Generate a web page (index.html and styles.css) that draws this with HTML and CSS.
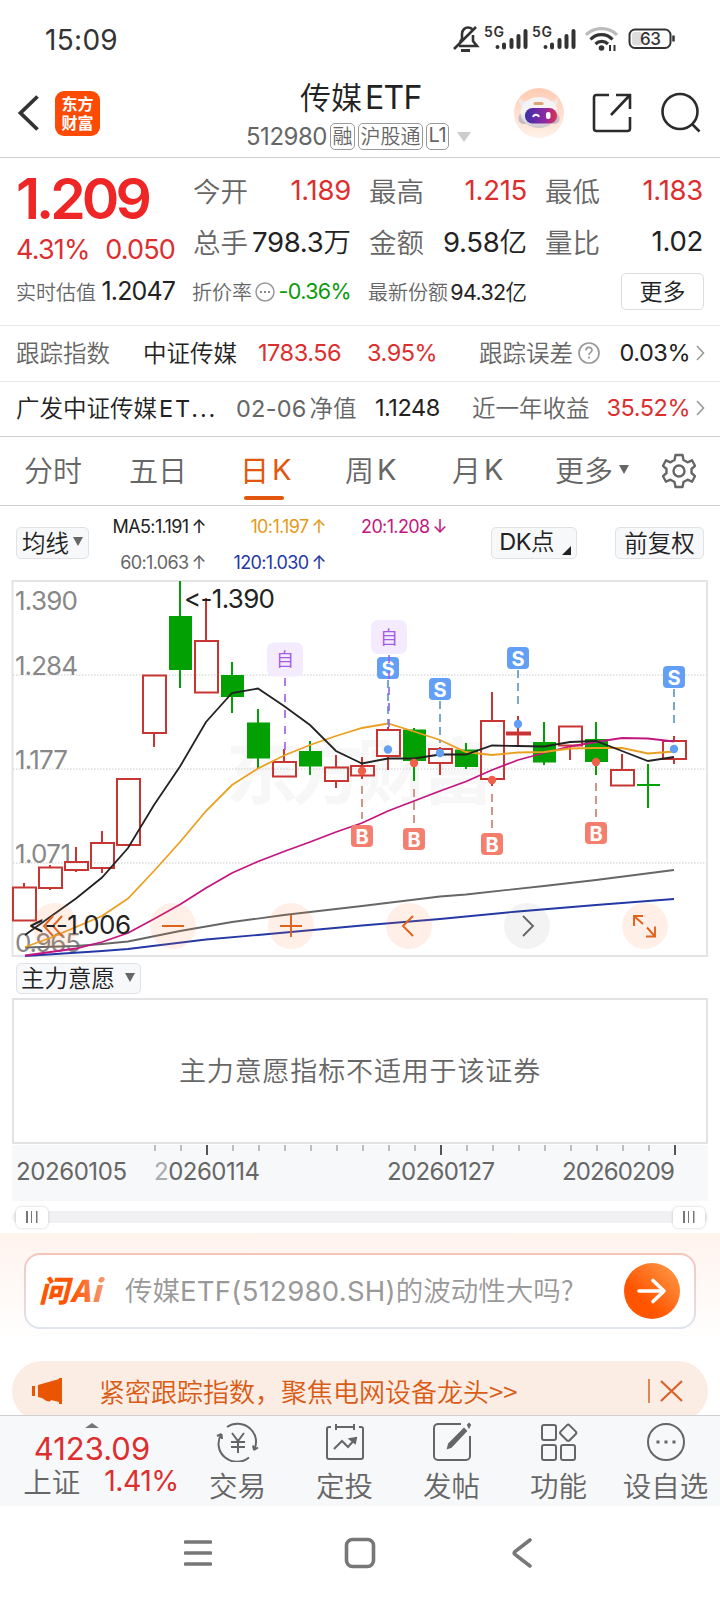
FILE: index.html
```
<!DOCTYPE html>
<html lang="zh-CN">
<head>
<meta charset="utf-8">
<title>传媒ETF 512980</title>
<link rel="stylesheet" href="styles.css">
</head>
<body>

<div class="statusbar">
  <span class="clock n">15:09</span>
  <svg class="status-icons" width="228" height="32" viewBox="450 22 228 32">
    <!-- muted bell -->
    <g fill="none" stroke="#333" stroke-width="2.6">
      <path d="M459 46h18l-4-5v-6M460 42l2-3v-5c0-4 3-6.500 6-6.500 1.500 0 3 .5 4 1.500M454 49l22-22"/>
      <path d="M461 50.500h9" stroke-width="3"/>
    </g>
    <g class="sig"><text x="484" y="37" textLength="20">5G</text><text x="532" y="37" textLength="20">5G</text></g>
    <g stroke="#333" stroke-width="4" stroke-linecap="round">
      <path d="M497.500 47v0M504 44.500v3M511.500 40v7M518.500 36v11M525.500 31v16"/>
      <path d="M545.500 47v0M552 44.500v3M559.500 40v7M566.500 36v11M573.500 31v16"/>
    </g>
    <g fill="none" stroke="#333" stroke-width="3.200">
      <path d="M586 35c8-8.500 23-8.500 31 0" stroke="#bbb"/>
      <path d="M590.500 39.500c6-6.500 16-6.500 22 0M595.500 44c3.500-3.500 9-3.500 12.500 0"/>
      <path d="M610 45v6M614.500 45v6" stroke-width="2"/>
    </g>
    <circle cx="601.500" cy="48" r="2.800" fill="#333"/>
    <rect x="629.500" y="29.500" width="41" height="18.500" rx="5.500" fill="none" stroke="#333" stroke-width="2"/>
    <rect x="632" y="32" width="10" height="13.500" rx="3" fill="#ddd"/>
    <path d="M673.500 35.500v6" stroke="#333" stroke-width="2.500"/>
    <text class="battery" x="640" y="45" textLength="21">63</text>
  </svg>
</div>

<header class="header">
  <div class="header-left">
    <svg width="22" height="38" viewBox="0 0 22 38"><path d="M20.500 2.500 3.500 19l17 16.500" fill="none" stroke="#333" stroke-width="3.800"/></svg>
    <div class="logo"><b>东方</b><b>财富</b></div>
  </div>
  <div class="title">
    <h1>传媒<span class="n">ETF</span></h1>
    <div class="subtitle">
      <span class="code n">512980</span><i>融</i><i>沪股通</i><i class="n">L1</i>
      <svg width="14" height="10"><path d="M0 0h14l-7 10z" fill="#ccc"/></svg>
    </div>
  </div>
  <div class="header-right">
    <svg width="50" height="50" viewBox="0 0 50 50">
      <defs>
        <linearGradient id="halo" x1="0" y1="0" x2="0" y2="1"><stop offset="0" stop-color="#ffcbb3"/><stop offset="1" stop-color="#fff1e8"/></linearGradient>
        <linearGradient id="visor"><stop offset="0" stop-color="#3b2fa8"/><stop offset=".6" stop-color="#8a2aa5"/><stop offset="1" stop-color="#e0304f"/></linearGradient>
        <linearGradient id="shell" x1="0" y1="0" x2="0" y2="1"><stop offset=".5" stop-color="#f6f3f4"/><stop offset="1" stop-color="#cdc6cc"/></linearGradient>
      </defs>
      <circle cx="25" cy="25" r="25" fill="url(#halo)"/>
      <path d="M6 9c0 4 3 4 7 4l-4 6c-4-2-5-6-3-10zM43 9c0 4-3 4-7 4l4 6c4-2 5-6 3-10z" fill="#efe9ea"/>
      <rect x="4.500" y="25" width="41" height="11" rx="5" fill="#c4bdc6"/>
      <ellipse cx="25" cy="24.500" rx="18.500" ry="15.500" fill="url(#shell)"/>
      <rect x="19.500" y="14" width="10" height="3" rx="1.500" fill="#dda574"/>
      <rect x="11" y="20" width="32" height="15.500" rx="7.500" fill="url(#visor)"/>
      <path d="M19 29c1-3 5-3 6 0" fill="none" stroke="#fff" stroke-width="1.800"/>
      <rect x="32" y="24" width="4.500" height="7" rx="2" fill="#fff"/>
    </svg>
    <svg width="40" height="40" viewBox="0 0 40 40" fill="none" stroke="#2b2b2b" stroke-width="2.600">
      <path d="M17 2H4.500a2.500 2.500 0 0 0-2.500 2.500v31a2.500 2.500 0 0 0 2.500 2.500h31a2.500 2.500 0 0 0 2.500-2.500V24M19 22 37 3M24 2h14v14"/>
    </svg>
    <svg width="42" height="42" viewBox="0 0 42 42" fill="none" stroke="#2b2b2b" stroke-width="2.600">
      <circle cx="20" cy="19.500" r="17.500"/><path d="m32 32 7.500 7.500"/>
    </svg>
  </div>
</header>

<section class="quote">
  <div class="last">
    <div class="price n">1.209</div>
    <div class="change red n"><span>4.31%</span><span>0.050</span></div>
  </div>
  <div class="cell"><label>今开</label><span class="n red">1.189</span></div>
  <div class="cell"><label>最高</label><span class="n red">1.215</span></div>
  <div class="cell"><label>最低</label><span class="n red">1.183</span></div>
  <div class="cell"><label>总手</label><span><span class="n">798.3</span>万</span></div>
  <div class="cell"><label>金额</label><span><span class="n">9.58</span>亿</span></div>
  <div class="cell"><label>量比</label><span class="n">1.02</span></div>
  <div class="cell small"><label>实时估值</label><span class="n est">1.2047</span></div>
  <div class="cell small"><label>折价率</label>
    <svg class="dots" width="20" height="20" viewBox="0 0 20 20"><circle cx="10" cy="10" r="9" fill="none" stroke="#999" stroke-width="1.500"/><path d="M5 10h2M9 10h2M13 10h2" stroke="#888" stroke-width="2"/></svg>
    <span class="n green">-0.36%</span></div>
  <div class="cell small"><label>最新份额</label><span><span class="n">94.32</span>亿</span></div>
  <div class="cell small"><button class="more">更多</button></div>
</section>

<section class="info-row track">
  <span class="gray">跟踪指数</span>
  <span>中证传媒</span>
  <span class="n red">1783.56</span>
  <span class="n red">3.95%</span>
  <span class="gray with-icon">跟踪误差<svg width="22" height="22" viewBox="0 0 22 22" fill="none" stroke="#999" stroke-width="1.700"><circle cx="11" cy="11" r="10"/><path d="M8 8.500c0-4 6-4 6-.3 0 2-3 2.300-3 4.800M11 14.500v2"/></svg></span>
  <span class="n right">0.03%</span>
  <svg class="chev" width="9" height="16"><path d="m1 1 6.500 7L1 15" fill="none" stroke="#999" stroke-width="1.600"/></svg>
</section>
<section class="info-row fund">
  <span>广发中证传媒<span class="n fund-tail">ET...</span></span>
  <span class="gray"><span class="n nav-date">02-06</span>净值</span>
  <span class="n">1.1248</span>
  <span class="gray">近一年收益</span>
  <span class="n red right">35.52%</span>
  <svg class="chev" width="9" height="16"><path d="m1 1 6.500 7L1 15" fill="none" stroke="#999" stroke-width="1.600"/></svg>
</section>

<nav class="tabs">
  <a>分时</a><a>五日</a><a class="on">日<span class="n">K</span></a><a>周<span class="n">K</span></a><a>月<span class="n">K</span></a>
  <a>更多<svg width="10" height="9"><path d="M0 0h10L5 9z" fill="#666"/></svg></a>
  <svg class="gear" width="34" height="36" viewBox="0 0 34 36" fill="none" stroke="#666" stroke-width="2.400" stroke-linejoin="round">
    <path d="M13.500 2h7l1 5 4 2.300 4.500-2 3 5.500-3.500 3.200v4l3.500 3.200-3 5.500-4.500-2-4 2.300-1 5h-7l-1-5-4-2.300-4.500 2-3-5.500L4.500 20v-4L1 12.800l3-5.500 4.500 2 4-2.300z"/><circle cx="17" cy="18" r="5.500"/>
  </svg>
</nav>

<section class="ma">
  <button class="chip">均线<svg width="10" height="9"><path d="M0 0h10L5 9z" fill="#666"/></svg></button>
  <div class="ma-values n">
    <span>MA5:1.191<em>↑</em></span><span class="c10">10:1.197<em>↑</em></span><span class="c20">20:1.208<em>↓</em></span>
    <span class="c60">60:1.063<em>↑</em></span><span class="c120">120:1.030<em>↑</em></span>
  </div>
  <button class="chip dk"><span><span class="n">DK</span>点</span><svg width="9" height="9"><path d="M9 0v9H0z" fill="#222"/></svg></button>
  <button class="chip fq">前复权</button>
</section>

<svg class="chart" width="720" height="378" viewBox="0 580 720 378">
  <text class="watermark" x="226" y="798" textLength="268">东方财富</text>
  <rect x="12.500" y="581" width="694.500" height="375" fill="none" stroke="#e2e2e4" stroke-width="1.800"/>
  <path d="M13 675h694M13 769h694M13 863h694" stroke="#ddd" stroke-width="1.500" stroke-dasharray="1.500 1.500"/>
  <g class="scale">
    <text x="15" y="610" textLength="63">1.390</text>
    <text x="15" y="675" textLength="63">1.284</text>
    <text x="15" y="769" textLength="53">1.177</text>
    <text x="15" y="863" textLength="56">1.071</text>
    <text x="15" y="952" textLength="66">0.965</text>
  </g>

  <!-- rising candles -->
  <g class="up">
    <path d="M24 883v4M50 865v3M50 888v2M76 847v15M76 870v2M102 831v12M102 868v5M154 733v14M206 598v43M284 749v13M336 755v12M336 781v7M362 757v9M362 775v4M388 727v3M388 756v14M440 747v2M440 763v12M492 692v29M492 779v7M518 716v31M570 745v15M622 754v16M674 736v5M674 759v5"/>
    <rect x="13" y="887.500" width="23" height="33"/>
    <rect x="39" y="867.500" width="23" height="20.500"/>
    <rect x="65" y="862" width="23" height="8"/>
    <rect x="91" y="843" width="23" height="25"/>
    <rect x="117" y="779" width="23" height="66"/>
    <rect x="143" y="675.500" width="23" height="57.500"/>
    <rect x="195" y="641" width="23" height="51.500"/>
    <rect x="273" y="762" width="23" height="14.500"/>
    <rect x="325" y="767.500" width="23" height="13.500"/>
    <rect x="351" y="766" width="23" height="9.500"/>
    <rect x="377" y="730" width="23" height="26"/>
    <rect x="429" y="749" width="23" height="14"/>
    <rect x="481" y="721" width="23" height="58"/>
    <rect x="507" y="732.500" width="23" height="2"/>
    <rect x="559" y="726.500" width="23" height="19"/>
    <rect x="611" y="770" width="23" height="15.500"/>
    <rect x="663" y="741" width="23" height="18"/>
  </g>
  <!-- falling candles -->
  <g class="down">
    <path d="M180 581v107M232 662v51M258 709v59M310 741v34M414 728v53M466 743v26M544 722v43M596 722v53M648 764v44"/>
    <rect x="169" y="616" width="23" height="54"/>
    <rect x="221" y="675" width="23" height="22"/>
    <rect x="247" y="722.500" width="23" height="36"/>
    <rect x="299" y="751" width="23" height="15.500"/>
    <rect x="403" y="729.500" width="23" height="31.500"/>
    <rect x="455" y="749.500" width="23" height="17.500"/>
    <rect x="533" y="742" width="23" height="20.500"/>
    <rect x="585" y="739" width="23" height="23"/>
    <rect x="637" y="784" width="23" height="2"/>
  </g>

  <!-- moving averages -->
  <g class="avg">
    <polyline stroke="#666" points="25,947.500 76,946 102,944 128,941.500 180,931 232,922 284,915 362,906 440,896.500 466,894.500 544,886 596,880 674,870"/>
    <polyline stroke="#2438a6" points="25,956 102,951 128,949 206,939.500 258,935 362,925.500 440,919 518,911.500 596,905 674,899"/>
    <polyline stroke="#c3177f" points="25,955.500 76,948.500 102,942 128,933 154,919 180,904.500 206,888 232,873 258,861.500 284,851.500 310,842 336,832 362,823 388,811 414,801 440,791 466,781.500 492,770 518,760 544,753 570,746.500 596,742 622,738 648,738.500 674,741.500"/>
    <polyline stroke="#eaa021" points="25,947 50,938 76,927 102,916 128,898.500 154,871 180,842 206,811 232,785 258,768.500 284,755.500 310,745 336,736 362,728 388,723.500 414,731.500 440,740 466,752 492,755 518,752.500 544,752 570,748.500 596,748 622,748 648,753.500 674,751.500"/>
    <polyline stroke="#222" points="25,935 50,917 76,898.500 102,877.500 128,848 154,805 180,766.500 206,722 232,693 258,688.500 284,706 310,725 336,751 362,763.500 388,758.500 414,758.500 440,754.500 466,754.500 492,745.500 518,746 544,746.500 570,742 596,741 622,751 648,761 674,757"/>
  </g>

  <!-- trade marks -->
  <g fill="none" stroke-width="1.800">
    <path d="M388 680v45M440 701v42M518 670v38M674 689v38" stroke="#6b9fc7" stroke-dasharray="8 5"/>
    <path d="M362 786v33M414 789v38M492 794v38M596 783v38" stroke="#c98d82" stroke-dasharray="8 5"/>
    <path d="M285 678v72" stroke="#a86be8" stroke-dasharray="8 8"/>
  </g>
  <g fill="#629ff5">
    <circle cx="388" cy="749.500" r="4.200"/><circle cx="440" cy="753" r="4.200"/><circle cx="518" cy="724" r="4.200"/><circle cx="674" cy="749" r="4.200"/>
    <rect x="377" y="657" width="22" height="22" rx="4"/><rect x="429" y="678" width="22" height="22" rx="4"/><rect x="507" y="647" width="22" height="22" rx="4"/><rect x="663" y="666" width="22" height="22" rx="4"/>
  </g>
  <g fill="#f47f6f">
    <g fill="#f05f4a"><circle cx="362" cy="771" r="4.200"/><circle cx="414" cy="763" r="4.200"/><circle cx="492" cy="780" r="4.200"/><circle cx="596" cy="762" r="4.200"/></g>
    <rect x="351" y="825" width="22" height="22" rx="4"/><rect x="403" y="828" width="22" height="22" rx="4"/><rect x="481" y="833" width="22" height="22" rx="4"/><rect x="585" y="822" width="22" height="22" rx="4"/>
  </g>
  <g class="mark">
    <text x="388" y="675.500">S</text><text x="440" y="696.500">S</text><text x="518" y="665.500">S</text><text x="674" y="684.500">S</text>
    <text x="362" y="843.500">B</text><text x="414" y="846.500">B</text><text x="492" y="851.500">B</text><text x="596" y="840.500">B</text>
  </g>
  <path d="M389 655v72" stroke="#9463e8" stroke-width="1.600" stroke-dasharray="8 8"/>
  <g fill="#f4ebfe"><rect x="267" y="642.500" width="36" height="34" rx="7"/><rect x="371" y="620" width="36" height="34" rx="7"/></g>
  <g class="self"><text x="285" y="666">自</text><text x="389" y="644">自</text></g>

  <!-- round controls -->
  <g fill="#fd7b3a" fill-opacity=".12"><circle cx="55" cy="926" r="23"/><circle cx="173" cy="926" r="23"/><circle cx="291" cy="926" r="23"/><circle cx="409" cy="926" r="23"/><circle cx="527" cy="926" r="23" fill="#555" fill-opacity=".07"/><circle cx="645" cy="926" r="23"/></g>
  <g fill="none" stroke="#e0621c" stroke-width="1.900">
    <path d="M53 916 44 926l9 10M62 916l-9 10 9 10"/>
    <path d="M162 926h22M280 926h22M291 915v22M413 916l-10 10 10 10"/>
    <path d="M634 926v-10h9M634 916l9 8M655 926.500v10h-9M655 936.500l-8-9"/>
    <path d="m523 916 10 10-10 10" stroke="#666"/>
  </g>
  <g class="extreme">
    <text x="184" y="608" textLength="91">&lt;-1.390</text>
    <text x="28" y="934" textLength="103">&lt;--1.006</text>
  </g>
</svg>

<button class="chip indicator">主力意愿<svg width="10" height="9"><path d="M0 0h10L5 9z" fill="#666"/></svg></button>
<div class="empty">主力意愿指标不适用于该证券</div>

<svg class="axis" width="720" height="56" viewBox="0 1145 720 56">
  <rect x="12" y="1145" width="696" height="56" fill="#f7f8fa"/>
  <path d="M155 1145v6M181 1145v6M233 1145v6M259 1145v6M285 1145v6M311 1145v6M337 1145v6M363 1145v6M389 1145v6M415 1145v6M467 1145v6M493 1145v6M519 1145v6M545 1145v6M571 1145v6M597 1145v6M623 1145v6M649 1145v6" stroke="#aaa" stroke-width="1.500"/>
  <path d="M207 1145v10M441 1145v10M675 1145v10" stroke="#555" stroke-width="2"/>
  <text x="16" y="1180" textLength="111">20260105</text>
  <text x="154" y="1180" textLength="106"><tspan fill="#aaa">2</tspan>0260114</text>
  <text x="387" y="1180" textLength="108">20260127</text>
  <text x="562" y="1180" textLength="113">20260209</text>
</svg>

<div class="slider"><i></i><i></i></div>

<section class="ask">
  <div class="ask-box">
    <svg class="ai-logo" width="72" height="44" viewBox="0 0 72 44">
      <defs><linearGradient id="ai"><stop offset=".5" stop-color="#fd5602"/><stop offset="1" stop-color="#f59a76"/></linearGradient></defs>
      <text x="0" y="33" textLength="62" fill="url(#ai)">问Ai</text>
    </svg>
    <span class="question">传媒<span class="n">ETF(512980.SH)</span>的波动性大吗?</span>
    <svg class="go" width="56" height="56" viewBox="0 0 56 56">
      <defs><linearGradient id="go" x1=".2" y1=".8" x2=".9" y2=".1"><stop offset=".2" stop-color="#ff5500"/><stop offset="1" stop-color="#ff9443"/></linearGradient></defs>
      <circle cx="28" cy="28" r="28" fill="url(#go)"/>
      <path d="M15 28h25M29 17.500 40 28 29 38.500" fill="none" stroke="#fff" stroke-width="3.600" stroke-linecap="round" stroke-linejoin="round"/>
    </svg>
  </div>
  <div class="banner">
    <svg width="32" height="28" viewBox="0 0 32 28" fill="#ea5504"><path d="M1 9h3v10H1zM7 8l21-6V1h3v26h-3v-2l-8-2c-1 3-4 1.500-9-2l-4-1z"/></svg>
    <span class="banner-text">紧密跟踪指数，聚焦电网设备龙头&gt;&gt;</span>
    <svg class="close" width="36" height="26" viewBox="0 0 36 26" fill="none" stroke="#d9622a" stroke-width="2.200"><path d="M1 1v24" stroke-width="1.500"/><path d="m13 3 21 20M34 3 13 23"/></svg>
  </div>
</section>

<footer class="bottom">
  <div class="index">
    <svg class="up-arrow" width="14" height="5"><path d="M0 5l7-5 7 5z" fill="#777"/></svg>
    <div class="n red idx">4123.09</div>
    <div class="idx-row"><span>上证</span><span class="n red">1.41%</span></div>
  </div>
  <a>
    <svg width="44" height="40" viewBox="0 0 44 40"><path d="M11 5A18.500 18 0 0 1 38 28M38 28l4-2.500M38 28l-1-4.500M33 35.500A18.500 18 0 0 1 5.500 12M5.500 12 1 14M5.500 12 6 17"/><path d="m16 11 6 8 6-8M22 19v12M15 20h14M15 25h14"/></svg>
    交易
  </a>
  <a>
    <svg width="44" height="40" viewBox="0 0 44 40"><path d="M8 5H6a2 2 0 0 0-2 2v28a2 2 0 0 0 2 2h32a2 2 0 0 0 2-2V7a2 2 0 0 0-2-2h-2M13 5h18M13 2v6M31 2v6M11 27l8-8 6 6 8-9"/><path d="m27 17 6-1-1 5z" fill="#666"/></svg>
    定投
  </a>
  <a>
    <svg width="44" height="40" viewBox="0 0 44 40"><path d="M31 2H8a4 4 0 0 0-4 4v28a4 4 0 0 0 4 4h28a4 4 0 0 0 4-4V14"/><path d="m34 7 2 2-15 16-3 1 1-4zM38 3l1-1 1 1-1 2z" fill="#666"/></svg>
    发帖
  </a>
  <a>
    <svg width="44" height="40" viewBox="0 0 44 40"><rect x="5" y="3" width="14" height="15" rx="2"/><rect x="5" y="23" width="14" height="15" rx="2"/><rect x="24" y="23" width="14" height="15" rx="2"/><rect x="25" y="4.500" width="12.500" height="12.500" rx="2" transform="rotate(45 31.200 10.700)"/></svg>
    功能
  </a>
  <a>
    <svg width="44" height="40" viewBox="0 0 44 40"><circle cx="22" cy="20" r="18"/><path d="M12.500 20h3M20.500 20h3M28.500 20h3" stroke-width="3"/></svg>
    设自选
  </a>
</footer>

<div class="sysnav">
  <svg width="28" height="28" viewBox="0 0 28 28"><path d="M1.500 3h25M1.500 14h25M1.500 25h25" stroke-linecap="round"/></svg>
  <svg width="32" height="32" viewBox="0 0 32 32"><rect x="2.500" y="2.500" width="27" height="27" rx="6"/></svg>
  <svg width="20" height="30" viewBox="0 0 20 30"><path d="M18 2 3 13.500q-1.500 1.500 0 3L18 28" stroke-linecap="round"/></svg>
</div>

</body>
</html>
```
FILE: styles.css
```
* { box-sizing: border-box; }

body {
  margin: 0;
  width: 720px;
  height: 1600px;
  overflow: hidden;
  background: #fff;
  color: #222;
  font-family: "Noto Sans CJK SC", sans-serif;
  font-weight: 350;
  font-variant-ligatures: none;
  font-feature-settings: "calt" 0;
  white-space: nowrap;
}

svg { display: block; flex: none; }
label, span, i, a { line-height: 1; }
i, em { font-style: normal; }

/* latin and digits */
.n {
  font-family: Inter, "Noto Sans CJK SC", sans-serif;
  font-weight: 400;
  letter-spacing: -0.02em;
}

.red { color: #dc2f2f; }
.green { color: #0a9a0a; }
.gray { color: #666; }
.right { text-align: right; }

/* system bar */
.statusbar {
  height: 76px;
  padding: 0 42px 0 45px;
  display: flex;
  align-items: center;
  justify-content: space-between;
}
.clock { font-size: 28px; color: #333; letter-spacing: 0.3px; padding-top: 3px; }
.statusbar text { font-family: Inter, sans-serif; fill: #333; }
.sig text { font-size: 14px; font-weight: 600; }
.statusbar .battery { font-size: 17px; font-weight: 500; }

/* title bar */
.header {
  height: 82px;
  padding: 0 18px 8px 17px;
  border-bottom: 1px solid #d0d0d0;
  display: grid;
  grid-template-columns: 230px 1fr 188px;
  align-items: center;
}
.header-left { display: flex; align-items: center; gap: 16px; }
.logo {
  width: 45px;
  height: 45px;
  border-radius: 9px;
  background: #fd4a04;
  color: #fff;
  font-size: 16px;
  line-height: 19px;
  padding-top: 3px;
  text-align: center;
}
.logo b { display: block; font-weight: 700; }
.title { padding-top: 3px; }
.title h1 {
  margin: 0 0 9px 53px;
  font-size: 31px;
  line-height: 34px;
  font-weight: 350;
}
.title h1 .n { font-size: 32px; margin-left: 3px; }
.subtitle { display: flex; align-items: center; gap: 3px; height: 27px; color: #666; margin-left: -1px; }
.subtitle .code { font-size: 24px; }
.subtitle i {
  border: 1.5px solid #999;
  border-radius: 5px;
  height: 27px;
  line-height: 23px;
  padding: 0 1.5px;
  font-size: 20px;
}
.subtitle svg { margin-left: 5px; }
.header-right { display: flex; align-items: center; justify-content: space-between; }

/* quote board */
.quote {
  height: 167px;
  padding: 8px 0 0 17px;
  display: grid;
  grid-template-columns: repeat(4, 158px);
  grid-template-rows: 51px 50px 49px;
  column-gap: 18px;
  font-size: 27.5px;
}
.last { grid-row: 1 / 3; }
.price { font-size: 57px; line-height: 66px; font-weight: 600; letter-spacing: -0.07em; margin-left: -1px; color: #ee2626; }
.change { display: flex; justify-content: space-between; font-size: 27px; margin: 4px 0 0 -1px; letter-spacing: -0.03em; }
.cell { display: flex; align-items: center; justify-content: space-between; padding-bottom: 1px; }
.cell label { color: #666; }
.cell .n { letter-spacing: -0.01em; }
.cell.small { font-size: 21.5px; padding: 0; }
.cell.small .n { letter-spacing: -0.03em; }
.cell.small label { font-size: 20px; margin-left: -1px; }
.cell.small .est { font-size: 25px; letter-spacing: -0.035em; }
.more {
  width: 83px;
  height: 37px;
  margin: 0 -1px 1px auto;
  border: 1.5px solid #ddd;
  border-radius: 5px;
  background: #fff;
  font: 350 23px/28px "Noto Sans CJK SC", sans-serif;
  padding-bottom: 4px;
  color: #222;
}

.info-row {
  height: 56px;
  padding: 0 0 2px 16px;
  border-top: 1px solid #e8e8e8;
  display: grid;
  align-items: center;
  font-size: 23.5px;
}
.track { grid-template-columns: 127px 115px 109px 112px 123px 88px 22px; }
.fund { grid-template-columns: 220px 139px 97px 118px 100px 22px; height: 55px; }
.fund-tail { margin-left: 2px; letter-spacing: 0.08em; }
.nav-date { letter-spacing: 0.01em; margin-right: 3px; }
.with-icon { display: flex; align-items: center; gap: 5px; }
.chev { margin-left: 6px; }

/* period tabs */
.tabs {
  height: 70px;
  border: solid #d0d0d0;
  border-width: 1px 0;
  padding: 0 0 1px 24px;
  display: grid;
  grid-template-columns: 105px 111px 105px 107px 103px 107px 34px;
  align-items: center;
  color: #666;
  font-size: 29px;
}
.tabs a { position: relative; display: flex; align-items: center; gap: 3px; padding-bottom: 3px; }
.tabs a svg { margin-left: 3px; }
.tabs .on { color: #e2570d; font-weight: 400; }
.tabs .on::after {
  content: "";
  position: absolute;
  left: 4px;
  bottom: -13px;
  width: 40px;
  height: 4px;
  border-radius: 2px;
  background: #e2570d;
}

/* average legend */
.ma { height: 74px; padding: 0 16px; display: flex; align-items: center; }
.chip {
  height: 32px;
  padding: 0 5px 3px;
  border: 1.5px solid #e0e2e5;
  border-radius: 5px;
  background: #f7f8fa;
  display: flex;
  align-items: center;
  justify-content: space-between;
  font: 350 23.5px/26px "Noto Sans CJK SC", sans-serif;
  color: #222;
}
.ma > .chip:first-child { width: 73px; }
.dk { width: 86px; padding-left: 7px; }
.dk svg { align-self: flex-end; }
.fq { width: 89px; justify-content: center; margin-left: 38px; }
.ma-values {
  width: 403px;
  padding-top: 4px;
  display: grid;
  grid-template-columns: 117px 120px 121px;
  row-gap: 18px;
  font-size: 18px;
  letter-spacing: -0.035em;
  text-align: right;
}
.ma-values em { margin-left: 3px; }
.c10 { color: #e59a1c; }
.c20 { color: #c3177f; }
.c60 { color: #666; }
.c120 { color: #2438a6; }

/* kline */
.chart text { font-family: Inter, sans-serif; font-weight: 400; }
.chart .watermark { font: 700 72px "Noto Sans CJK SC", sans-serif; fill: #f7f7f7; }
.scale { font-size: 26px; fill: #888; }
.extreme { font-size: 26px; fill: #222; }
.up { fill: #fff; fill-opacity: 0; stroke: #c73632; stroke-width: 2; }
.down { fill: #02a002; }
.down path { stroke: #02a002; stroke-width: 2; }
.avg { fill: none; stroke-width: 1.8; }
.chart .mark text { font-size: 20px; font-weight: 700; fill: #fff; text-anchor: middle; }
.chart .self text { font: 400 18px "Noto Sans CJK SC", sans-serif; fill: #a45be6; text-anchor: middle; }

.indicator { width: 125px; height: 31px; margin: 5px 0 4px 16px; padding-left: 4px; }
.empty {
  height: 146px;
  margin: 0 12px 1px;
  border: 2px solid #e2e2e4;
  text-align: center;
  line-height: 140px;
  font-size: 27px;
  letter-spacing: 0.85px;
  color: #666;
}
.axis text { font: 400 24px Inter, sans-serif; fill: #666; }

.slider {
  height: 12px;
  margin: 10px 12px;
  padding: 0 3px 0 4px;
  border-radius: 6px;
  background: #f1f1f4;
  display: flex;
  align-items: center;
  justify-content: space-between;
}
.slider i {
  width: 32px;
  height: 21px;
  border-radius: 5px;
  background: linear-gradient(90deg, #777 1.5px, transparent 1.5px 5px, #777 5px 6.5px, transparent 6.5px 10px, #777 10px) center / 11.5px 12px no-repeat #fff;
  box-shadow: 0 0 3px rgba(0, 0, 0, .2);
}

/* assistant */
.ask {
  height: 182px;
  padding: 20px 12px 0;
  overflow: hidden;
  background: linear-gradient(#fff3ee, #fff 110px);
}
.ask-box {
  height: 76px;
  margin: 0 12px;
  padding: 0 14px 0 13px;
  border: 2px solid transparent;
  border-radius: 16px;
  background: linear-gradient(#fff, #fff) padding-box, linear-gradient(#f5c4ba, #dfe5f1) border-box;
  display: flex;
  align-items: center;
}
.ai-logo text { font: italic 900 30px "Noto Sans CJK SC", sans-serif; }
.question { margin-left: 14px; font-size: 27.5px; color: #999; }
.question .n { letter-spacing: 0.01em; }
.go { margin-left: auto; }
.banner {
  height: 60px;
  margin-top: 32px;
  padding: 0 24px 1px 19px;
  border-radius: 30px;
  background: #fcede4;
  display: flex;
  align-items: center;
  color: #d95b14;
  font-size: 26px;
}
.banner-text { margin-left: 36px; }
.close { margin-left: auto; }

/* app toolbar */
.bottom {
  height: 91px;
  border-top: 1px solid #d0d0d0;
  background: #f7f8fa;
  display: grid;
  grid-template-columns: 184px repeat(5, 107px);
  color: #666;
}
.index { display: flex; flex-direction: column; align-items: center; padding-top: 7px; }
.idx { font-size: 31px; line-height: 42px; letter-spacing: 0; }
.idx-row { display: flex; gap: 24px; align-items: center; font-size: 28.5px; margin-top: -3px; padding-left: 18px; }
.bottom a { display: flex; flex-direction: column; align-items: center; padding-top: 6px; font-size: 28.5px; gap: 9px; }
.bottom a svg { fill: none; stroke: #666; stroke-width: 2; }

.sysnav { height: 94px; display: flex; align-items: center; justify-content: space-between; padding: 0 188px 1px 184px; }
.sysnav svg { fill: none; stroke: #777; stroke-width: 3.6; }
.sysnav svg:nth-child(2) { margin-right: 5px; }
```
